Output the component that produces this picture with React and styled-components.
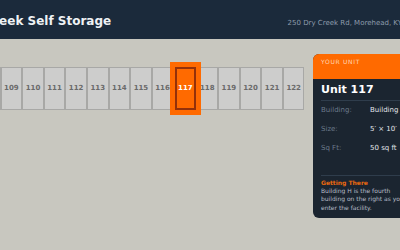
import React from "react";
import styled, { createGlobalStyle } from "styled-components";

const Global = createGlobalStyle`
  html, body { margin: 0; padding: 0; background: #c8c7bf; overflow: hidden; }
  body { font-family: "DejaVu Sans", "Liberation Sans", sans-serif; }
`;

const Viewport = styled.div`
  width: 400px;
  height: 250px;
  overflow: hidden;
  background: #c8c7bf;
`;

const Page = styled.div`
  width: 475px;
  margin-left: -57px;
`;

const Header = styled.header`
  box-sizing: border-box;
  height: 39px;
  padding: 14px 16px 0 13.5px;
  background: #1b2a3b;
  display: flex;
  justify-content: space-between;
  align-items: baseline;
`;

const Title = styled.h1`
  margin: 0;
  font-size: 12px;
  line-height: 14px;
  font-weight: bold;
  color: #eef1f4;
  white-space: nowrap;
`;

const Address = styled.span`
  font-size: 7px;
  line-height: 9px;
  color: #8e9cac;
  white-space: nowrap;
`;

const Main = styled.main`
  display: flex;
  align-items: flex-start;
  padding: 15px 1px 0 14.4px;
`;

const Strip = styled.div`
  display: flex;
  margin-top: 13.3px;
`;

const Cell = styled.div`
  position: relative;
  box-sizing: border-box;
  width: 21.6px;
  height: 42.3px;
  display: flex;
  align-items: center;
  justify-content: center;
  font-size: 7px;
  font-weight: bold;
  background: ${(p) => (p.$active ? "#ff6a00" : "#cdcdcc")};
  border: ${(p) => (p.$active ? "2px solid #94310a" : "1px solid #a8a8a6")};
  color: ${(p) => (p.$active ? "#ffffff" : "#6a6a6a")};
  box-shadow: ${(p) => (p.$active ? "0 0 0 5px #ff6a00" : "none")};
  z-index: ${(p) => (p.$active ? 2 : 1)};
  margin: ${(p) => (p.$active ? "0 0.3px 0 1.3px" : "0")};
`;

const Panel = styled.aside`
  margin-left: auto;
  width: 104px;
  border-radius: 6px;
  overflow: hidden;
  background: #1b2530;
`;

const PanelHead = styled.div`
  box-sizing: border-box;
  height: 24.5px;
  padding: 4px 8px 0;
  background: #ff6a00;
  color: #ffd7b5;
  font-size: 6px;
  line-height: 8px;
  letter-spacing: 0.7px;
  white-space: nowrap;
`;

const PanelBody = styled.div`
  padding: 0 8px 5px;
`;

const UnitName = styled.div`
  margin-top: 4.5px;
  padding-bottom: 4px;
  border-bottom: 1px solid #2f3d4c;
  font-size: 11px;
  line-height: 13px;
  font-weight: bold;
  color: #ffffff;
  white-space: nowrap;
`;

const Details = styled.dl`
  margin: 5px 0 0;
  display: grid;
  grid-template-columns: 49px 1fr;
  row-gap: 9.75px;
  font-size: 7px;
  line-height: 9px;
  white-space: nowrap;
`;

const Label = styled.dt`
  color: #6b7a8b;
`;

const Value = styled.dd`
  margin: 0;
  color: #e2e6eb;
`;

const Directions = styled.div`
  margin-top: 22.5px;
  border-top: 1px solid #2f3d4c;
  padding-top: 2.5px;
`;

const DirTitle = styled.div`
  font-size: 6px;
  line-height: 8px;
  font-weight: bold;
  color: #ea690f;
`;

const DirText = styled.p`
  margin: 0;
  width: 90px;
  font-size: 6px;
  line-height: 8.7px;
  color: #b6bdc7;
`;

const units = Array.from({ length: 16 }, (_, i) => 107 + i);

export default function App() {
  return (
    <Viewport>
      <Global />
      <Page>
        <Header>
          <Title>Dry Creek Self Storage</Title>
          <Address>250 Dry Creek Rd, Morehead, KY</Address>
        </Header>
        <Main>
          <Strip>
            {units.map((u) => (
              <Cell key={u} $active={u === 117}>
                {u}
              </Cell>
            ))}
          </Strip>
          <Panel>
            <PanelHead>YOUR UNIT</PanelHead>
            <PanelBody>
              <UnitName>Unit 117</UnitName>
              <Details>
                <Label>Building:</Label>
                <Value>Building H</Value>
                <Label>Size:</Label>
                <Value>5′ × 10′</Value>
                <Label>Sq Ft:</Label>
                <Value>50 sq ft</Value>
              </Details>
              <Directions>
                <DirTitle>Getting There</DirTitle>
                <DirText>
                  Building H is the fourth building on the right as you enter the facility.
                </DirText>
              </Directions>
            </PanelBody>
          </Panel>
        </Main>
      </Page>
    </Viewport>
  );
}
